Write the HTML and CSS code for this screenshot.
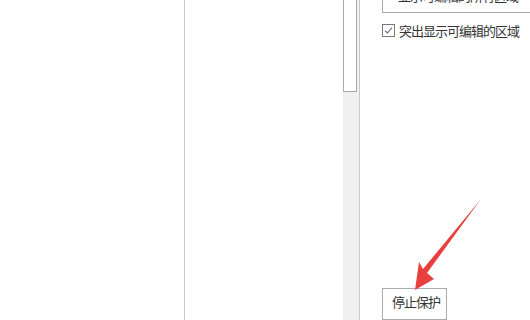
FILE: index.html
```html
<!DOCTYPE html>
<html lang="zh">
<head>
<meta charset="utf-8">
<link rel="stylesheet" href="styles.css">
</head>
<body>
<div class="app">
  <div class="left"></div>
  <div class="middle">
    <div class="list"></div>
    <div class="scrollbar"><div class="thumb"></div></div>
  </div>
  <div class="right">
    <div class="wide-btn">显示可编辑的所有区域</div>
    <label class="check-row">
      <span class="box"><svg width="11" height="11" viewBox="0 0 11 11"><path d="M2 5.6 L4.4 8 L9 2.6" fill="none" stroke="#666" stroke-width="1.1"/></svg></span>
      <span>突出显示可编辑的区域</span>
    </label>
    <div class="stop-btn">停止保护</div>
  </div>
</div>
<svg class="arrow" width="530" height="320" viewBox="0 0 530 320">
  <polygon points="481,199 423,269 419,262 415,290 434,279 427,273" fill="#e8403f"/>
</svg>
</body>
</html>
```
FILE: styles.css
```css
html, body {
  margin: 0;
  padding: 0;
  background: #fff;
  overflow: hidden;
}
body {
  font-family: "Noto Sans CJK SC", "Microsoft YaHei", sans-serif;
  font-size: 13px;
  letter-spacing: -1px;
  color: #333;
  width: 530px;
  height: 320px;
  position: relative;
}
.app {
  display: flex;
  height: 320px;
}
.left {
  width: 184px;
  border-right: 1px solid #c8c8c8;
  flex: none;
}
.middle {
  width: 174px;
  display: flex;
  border-right: 1px solid #c8c8c8;
  flex: none;
}
.list {
  width: 158px;
}
.scrollbar {
  width: 16px;
  background: #f0f0f0;
}
.thumb {
  width: 12px;
  height: 91px;
  border: 1px solid #a8a8a8;
  border-top: none;
  background: #fff;
}
.right {
  flex: 1;
  padding-left: 22px;
  display: flex;
  flex-direction: column;
  align-items: flex-start;
}
.wide-btn {
  margin-top: -16px;
  height: 31px;
  box-sizing: border-box;
  width: 200px;
  border: 1px solid #ababab;
  padding-left: 15px;
  line-height: 21px;
  white-space: nowrap;
}
.check-row {
  display: flex;
  align-items: center;
  margin-top: 11px;
  height: 13px;
  line-height: 13px;
  white-space: nowrap;
}
.box {
  width: 13px;
  height: 13px;
  box-sizing: border-box;
  border: 1px solid #7a7a7a;
  margin-right: 4px;
  display: flex;
}
.stop-btn {
  margin-top: 251px;
  height: 32px;
  width: 65px;
  box-sizing: border-box;
  border: 1px solid #ababab;
  padding-left: 9px;
  line-height: 26px;
  flex: none;
}
.arrow {
  position: absolute;
  left: 0;
  top: 0;
  pointer-events: none;
}
```
